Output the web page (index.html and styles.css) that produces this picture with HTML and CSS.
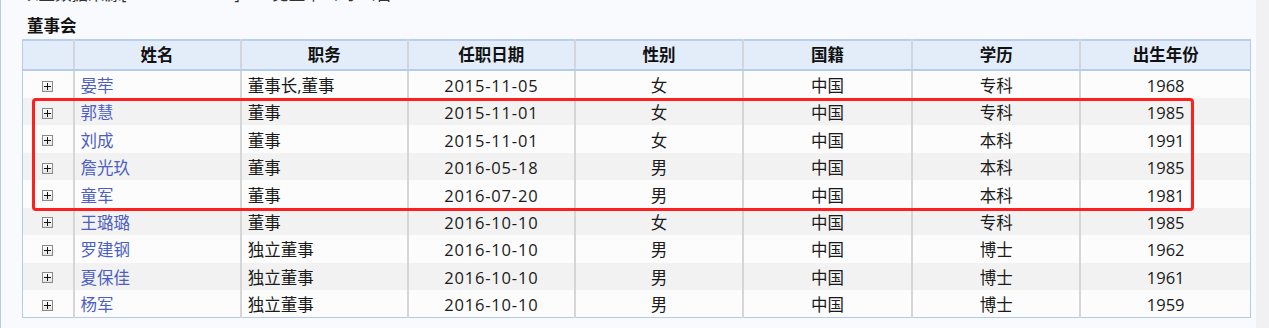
FILE: index.html
```html
<!DOCTYPE html>
<html lang="zh-CN">
<head>
<meta charset="utf-8">
<title>董事会</title>
<link rel="stylesheet" href="styles.css">
</head>
<body>
<div class="page">
  <div class="main">
    <div class="cutline">以上数据来源[<span class="gap"></span>]<span class="sep">—</span>见上市公司:公告</div>
    <div class="title">董事会</div>
    <div class="tablewrap">
      <table class="grid">
        <colgroup>
          <col class="c0"><col class="c1"><col class="c2"><col class="c3"><col class="c4"><col class="c5"><col class="c6"><col class="c7">
        </colgroup>
        <thead>
          <tr><th></th><th>姓名</th><th>职务</th><th>任职日期</th><th>性别</th><th>国籍</th><th>学历</th><th>出生年份</th></tr>
        </thead>
        <tbody>
          <tr><td class="ex"><span class="plus"></span></td><td class="nm"><a>晏荦</a></td><td class="l">董事长,董事</td><td class="d">2015-11-05</td><td>女</td><td>中国</td><td>专科</td><td>1968</td></tr>
          <tr><td class="ex"><span class="plus"></span></td><td class="nm"><a>郭慧</a></td><td class="l">董事</td><td class="d">2015-11-01</td><td>女</td><td>中国</td><td>专科</td><td>1985</td></tr>
          <tr><td class="ex"><span class="plus"></span></td><td class="nm"><a>刘成</a></td><td class="l">董事</td><td class="d">2015-11-01</td><td>女</td><td>中国</td><td>本科</td><td>1991</td></tr>
          <tr><td class="ex"><span class="plus"></span></td><td class="nm"><a>詹光玖</a></td><td class="l">董事</td><td class="d">2016-05-18</td><td>男</td><td>中国</td><td>本科</td><td>1985</td></tr>
          <tr><td class="ex"><span class="plus"></span></td><td class="nm"><a>童军</a></td><td class="l">董事</td><td class="d">2016-07-20</td><td>男</td><td>中国</td><td>本科</td><td>1981</td></tr>
          <tr><td class="ex"><span class="plus"></span></td><td class="nm"><a>王璐璐</a></td><td class="l">董事</td><td class="d">2016-10-10</td><td>女</td><td>中国</td><td>专科</td><td>1985</td></tr>
          <tr><td class="ex"><span class="plus"></span></td><td class="nm"><a>罗建钢</a></td><td class="l">独立董事</td><td class="d">2016-10-10</td><td>男</td><td>中国</td><td>博士</td><td>1962</td></tr>
          <tr><td class="ex"><span class="plus"></span></td><td class="nm"><a>夏保佳</a></td><td class="l">独立董事</td><td class="d">2016-10-10</td><td>男</td><td>中国</td><td>博士</td><td>1961</td></tr>
          <tr><td class="ex"><span class="plus"></span></td><td class="nm"><a>杨军</a></td><td class="l">独立董事</td><td class="d">2016-10-10</td><td>男</td><td>中国</td><td>博士</td><td>1959</td></tr>
        </tbody>
      </table>
      <div class="highlight"></div>
    </div>
  </div>
  <div class="track"></div>
</div>
</body>
</html>
```

FILE: styles.css
```css
html, body {
  margin: 0;
  padding: 0;
  height: 100%;
}
body {
  font-family: "Open Sans", "Noto Sans CJK SC", sans-serif;
  font-size: 16.5px;
  color: #1a1a1a;
  background: #f9fafd;
  overflow: hidden;
}
.page {
  display: flex;
  height: 328px;
}
.main {
  width: 1256px;
  border-left: 1px solid #b8cbe8;
  background: #f9fafd;
  padding-left: 21px;
  box-sizing: border-box;
}
.track {
  flex: 1;
  background: #f1f1f3;
}
.cutline {
  height: 22px;
  line-height: 22px;
  margin-top: -17px;
  color: #333;
  white-space: nowrap;
  overflow: hidden;
}
.cutline .gap {
  display: inline-block;
  width: 108px;
}
.cutline .sep {
  margin: 0 10px 0 6px;
}
.title {
  font-weight: bold;
  font-size: 16.5px;
  line-height: 20px;
  height: 20px;
  margin-top: 11px;
  padding-left: 5px;
  color: #111;
}
.tablewrap {
  position: relative;
  margin-top: 3px;
  width: 1229px;
}
.grid {
  border-collapse: collapse;
  table-layout: fixed;
  width: 1229px;
  border: 1px solid #b3cbee;
  border-top: 2px solid #b8cff0;
}
.c0 { width: 51px; }
.c1 { width: 167px; }
.c2 { width: 167px; }
.c3 { width: 167px; }
.c4 { width: 168px; }
.c5 { width: 169px; }
.c6 { width: 168px; }
.c7 { width: 170px; }
.grid th {
  height: 28px;
  padding: 0;
  background: #e3ecf9;
  border-bottom: 2px solid #b5ccee;
  border-left: 2px solid #d2d6dc;
  font-weight: bold;
  color: #111;
  text-align: center;
  line-height: 28px;
}
.grid th:first-child { border-left: none; }
.grid td {
  height: 27.45px;
  padding: 0;
  border-left: 2px solid #d6d6d6;
  text-align: center;
  line-height: 25px;
  white-space: nowrap;
  padding-top: 2px;
  box-sizing: border-box;
}
.grid td:first-child { border-left: none; }
.grid tbody tr:nth-child(odd) td { background: #fcfcfd; }
.grid tbody tr:nth-child(even) td { background: #f2f2f2; }
.grid td.l, .grid td.nm {
  text-align: left;
  padding-left: 6px;
}
.grid td.d {
  letter-spacing: 0.8px;
}
.grid td.nm a {
  color: #4b5ec6;
  text-decoration: none;
}
.grid td.ex {
  line-height: 0;
  padding-top: 3px;
}
.plus {
  display: inline-block;
  width: 9px;
  height: 9px;
  border: 1px solid #8a8a8a;
  background:
    linear-gradient(#111, #111) center / 7px 1px no-repeat,
    linear-gradient(#111, #111) center / 1px 7px no-repeat,
    linear-gradient(#ffffff, #e4e4e4);
  vertical-align: middle;
}
.highlight {
  position: absolute;
  left: 10px;
  top: 59px;
  width: 1162px;
  height: 113px;
  border: 3px solid #fe1f1f;
  border-radius: 4px;
  box-sizing: border-box;
  pointer-events: none;
}
```
